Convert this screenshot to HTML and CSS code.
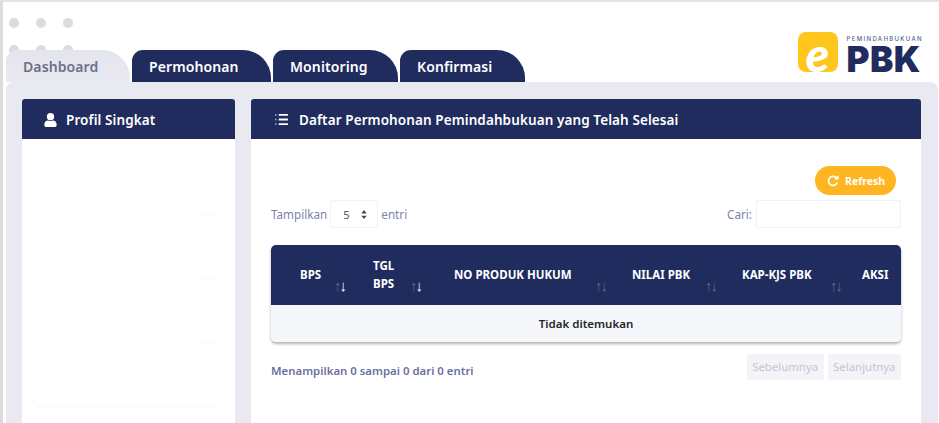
FILE: index.html
```html
<!DOCTYPE html>
<html lang="en">
<head>
    <meta charset="UTF-8">
    <meta name="viewport" content="width=device-width, initial-scale=1.0">
    <title>ePBK Dashboard</title>
    <link rel="stylesheet" href="styles.css">
</head>
<body>
    <div class="dots">
        <span></span><span></span><span></span>
        <span></span><span></span><span></span>
    </div>

    <div class="header">
        <div class="tabs">
            <a class="tab tab-active">Dashboard</a>
            <a class="tab tab-permohonan">Permohonan</a>
            <a class="tab tab-monitoring">Monitoring</a>
            <a class="tab tab-konfirmasi">Konfirmasi</a>
        </div>
        <div class="logo">
            <div class="logo-mark"><span>e</span></div>
            <div class="logo-text">
                <div class="logo-small">PEMINDAHBUKUAN</div>
                <div class="logo-big">PBK</div>
            </div>
        </div>
    </div>

    <div class="panel">
        <div class="card card-side">
            <div class="card-head head-side">
                <svg class="icon-user" viewBox="0 0 16 16"><circle cx="8" cy="4.4" r="3.9" fill="#fff"/><path d="M1.4 13c0-3 2-4.6 3.8-4.6 1.7 1 3.9 1 5.6 0 1.800 0 3.800 1.600 3.800 4.600 0 1.500-1 2.500-2.500 2.500H3.900c-1.500 0-2.500-1-2.500-2.500z" fill="#fff"/></svg>
                <span>Profil Singkat</span>
            </div>
            <div class="side-body">
                <div class="side-row"><i class="rule-short"></i></div>
                <div class="side-row"><i class="rule-short"></i></div>
                <div class="side-row"><i class="rule-short"></i></div>
                <div class="side-row"><i class="rule-long"></i></div>
            </div>
        </div>

        <div class="card card-main">
            <div class="card-head head-main">
                <svg class="icon-list" viewBox="0 0 14 12"><path d="M0 1h2M0 6h2M0 11h2" stroke="#fff" stroke-width="1.600" stroke-dasharray="1 .5" fill="none" opacity=".7"/><path d="M4 1h10M4 6h10M4 11h10" stroke="#fff" stroke-width="2" fill="none"/></svg>
                <span>Daftar Permohonan Pemindahbukuan yang Telah Selesai</span>
            </div>
            <div class="main-body">
                <div class="toolbar">
                    <button class="btn-refresh">
                        <svg class="icon-refresh" viewBox="0 0 12 12"><path d="M10.200 7.500A4.500 4.500 0 1 1 9 2.600" stroke="#fff" stroke-width="1.700" fill="none"/><path d="M7.200 4.400h4.300V0z" fill="#fff"/></svg>
                        Refresh
                    </button>
                </div>
                <div class="filters">
                    <div class="filter-len">
                        Tampilkan
                        <div class="select">5
                            <svg class="icon-caret" viewBox="0 0 8 12"><path d="M4 0l3.500 4.500h-7zM4 12L.5 7.500h7z" fill="#444"/></svg>
                        </div>
                        entri
                    </div>
                    <div class="filter-search">
                        Cari:
                        <div class="search-box"></div>
                    </div>
                </div>

                <table class="data">
                    <thead>
                        <tr>
                            <th>BPS<span class="sort"><i>↑</i><b>↓</b></span></th>
                            <th>TGL BPS<span class="sort"><i>↑</i><b>↓</b></span></th>
                            <th>NO PRODUK HUKUM<span class="sort"><i>↑</i><i>↓</i></span></th>
                            <th>NILAI PBK<span class="sort"><i>↑</i><i>↓</i></span></th>
                            <th>KAP-KJS PBK<span class="sort"><i>↑</i><i>↓</i></span></th>
                            <th>AKSI</th>
                        </tr>
                    </thead>
                    <tbody>
                        <tr><td colspan="6">Tidak ditemukan</td></tr>
                    </tbody>
                </table>

                <div class="table-foot">
                    <div class="info">Menampilkan 0 sampai 0 dari 0 entri</div>
                    <div class="pager">
                        <span class="page-btn">Sebelumnya</span>
                        <span class="page-btn">Selanjutnya</span>
                    </div>
                </div>
            </div>
        </div>
    </div>
</body>
</html>
```

FILE: styles.css
```css
html, body {
    height: 423px;
    overflow: hidden;
}
body {
    position: relative;
    box-sizing: border-box;
    margin: 0;
    padding-right: 1px;
    background: #fff;
    border-top: 2px solid #e4e4e4;
    border-left: 3px solid #dcdcdc;
    font-family: "Noto Sans", sans-serif;
    color: #212529;
}
.dots {
    position: absolute;
    left: 6px;
    top: 16px;
    display: grid;
    grid-template-columns: repeat(3, 10px);
    gap: 17px;
}
.dots span {
    width: 10px;
    height: 10px;
    border-radius: 50%;
    background: #dcdcdc;
}

.header {
    position: relative;
    display: flex;
    justify-content: space-between;
    align-items: flex-end;
    height: 80px;
}
.tabs {
    display: flex;
    gap: 2px;
    margin-left: 3px;
}
.tab {
    display: block;
    box-sizing: border-box;
    height: 32px;
    padding: 7px 0 0 17px;
    background: #202c5e;
    border-radius: 11px 28px 0 0;
    color: #fff;
    font-size: 14px;
    font-weight: 600;
    letter-spacing: .1px;
}
.tab-active {
    width: 124px;
    background: linear-gradient(#e3e4ec, #e9eaf2);
    color: #6c7089;
}
.tab-permohonan { width: 139px; }
.tab-monitoring { width: 125px; }
.tab-konfirmasi { width: 125px; }

.logo {
    display: flex;
    gap: 9px;
    height: 40px;
    margin: 0 15px 10px 0;
}
.logo-mark {
    width: 40px;
    height: 40px;
    padding-top: 2px;
    box-sizing: border-box;
    background: #ffc61e;
    border-radius: 8px;
    text-align: center;
}
.logo-mark span {
    display: block;
    color: #fff;
    font-family: "Lato", sans-serif;
    font-size: 48px;
    font-style: italic;
    font-weight: 900;
    line-height: 40px;
}
.logo-small {
    margin-top: 3px;
    color: #5b648c;
    font-family: "Inter", sans-serif;
    font-size: 6px;
    font-weight: 500;
    letter-spacing: 1.350px;
    line-height: 8px;
}
.logo-big {
    margin-top: 3px;
    color: #202c5e;
    font-family: "Inter", sans-serif;
    font-size: 35px;
    font-weight: 900;
    line-height: 26px;
    letter-spacing: .5px;
}

.panel {
    display: flex;
    gap: 16px;
    height: 400px;
    margin-left: 3px;
    padding: 17px 17px 0 16px;
    background: #e8e9f1;
    border-radius: 8px 8px 0 0;
}
.card {
    background: #fff;
    border-radius: 3px 3px 0 0;
}
.card-side { width: 213px; flex: none; }
.card-main { flex: 1; }
.card-head {
    display: flex;
    align-items: center;
    box-sizing: border-box;
    height: 40px;
    padding-top: 1px;
    background: #202c5e;
    border-radius: 3px 3px 0 0;
    color: #fff;
    font-size: 13.500px;
    font-weight: 600;
    letter-spacing: .1px;
}
.head-side { padding-left: 21px; gap: 8px; }
.head-main { padding-left: 24px; gap: 11px; }
.icon-user { width: 15px; height: 16px; }
.icon-list { width: 13px; height: 11px; }

.side-body { padding-top: 12px; }
.side-row {
    display: flex;
    align-items: flex-end;
    justify-content: flex-end;
    height: 64px;
    padding-right: 17px;
}
.rule-short, .rule-long {
    border-bottom: 1px dotted #f0f0f0;
}
.rule-short { width: 14px; }
.rule-long { width: 180px; }

.main-body { padding: 27px 20px 0; }
.toolbar {
    display: flex;
    justify-content: flex-end;
    padding-right: 5px;
}
.btn-refresh {
    display: flex;
    align-items: center;
    gap: 6px;
    height: 29px;
    width: 81px;
    padding: 0 0 0 12px;
    background: #ffb522;
    border: none;
    border-radius: 15px;
    color: #fff;
    font-family: inherit;
    font-size: 10.500px;
    font-weight: 700;
}
.icon-refresh { width: 12px; height: 12px; }

.filters {
    display: flex;
    justify-content: space-between;
    align-items: center;
    margin-top: 5px;
    color: #7d82a8;
    font-size: 11.700px;
}
.filter-len, .filter-search {
    display: flex;
    align-items: center;
}
.filter-len { gap: 3px; }
.filter-search { gap: 4px; }
.select {
    display: flex;
    align-items: center;
    justify-content: space-between;
    box-sizing: border-box;
    width: 48px;
    height: 28px;
    padding: 0 10px 0 12px;
    border: 1px solid #f1f2f6;
    border-radius: 3px;
    color: #555;
    font-size: 11px;
}
.icon-caret { width: 6px; height: 9px; }
.search-box {
    box-sizing: border-box;
    width: 145px;
    height: 28px;
    border: 1px solid #f0f1f5;
    border-radius: 2px;
}

.data {
    width: 630px;
    margin-top: 17px;
    table-layout: fixed;
    border-collapse: separate;
    border-spacing: 0;
    border-radius: 5px;
    box-shadow: 0 2px 3px rgba(0, 0, 0, .3);
}
.data th {
    position: relative;
    box-sizing: border-box;
    height: 60px;
    padding: 0 20px;
    background: #202c5e;
    color: #fff;
    font-size: 11.500px;
    font-weight: 700;
    line-height: 18px;
    text-align: left;
}
.data th:nth-child(1) { width: 83px; padding-left: 29px; border-radius: 5px 0 0 0; }
.data th:nth-child(2) { width: 76px; padding: 0 30px 0 19px; }
.data th:nth-child(3) { width: 182px; padding-left: 24px; padding-right: 0; }
.data th:nth-child(4) { width: 110px; }
.data th:nth-child(5) { width: 125px; padding-right: 0; }
.data th:nth-child(6) { padding: 0 0 0 15px; border-radius: 0 5px 0 0; }
.sort {
    position: absolute;
    right: 6px;
    bottom: 12px;
    font-size: 15px;
    line-height: 16px;
    letter-spacing: -2px;
}
.data th:nth-child(1) .sort,
.data th:nth-child(2) .sort { right: 9px; }
.sort i {
    font-style: normal;
    font-weight: 400;
    color: #5d678f;
}
.sort b {
    font-weight: 400;
    color: #fff;
}
.data td {
    height: 37px;
    padding: 0;
    background: #f6f7fa;
    border-radius: 0 0 5px 5px;
    font-size: 11.500px;
    font-weight: 600;
    text-align: center;
}

.table-foot {
    display: flex;
    justify-content: space-between;
    align-items: center;
    margin-top: 12px;
}
.info {
    margin-top: 6px;
    color: #6b6f9f;
    font-size: 11.400px;
    font-weight: 600;
}
.pager {
    display: flex;
    gap: 4px;
}
.page-btn {
    display: block;
    height: 26px;
    padding: 0 5.500px;
    background: #f3f3f8;
    border-radius: 2px;
    color: #c4c5d2;
    font-size: 11.400px;
    line-height: 26px;
}
```
